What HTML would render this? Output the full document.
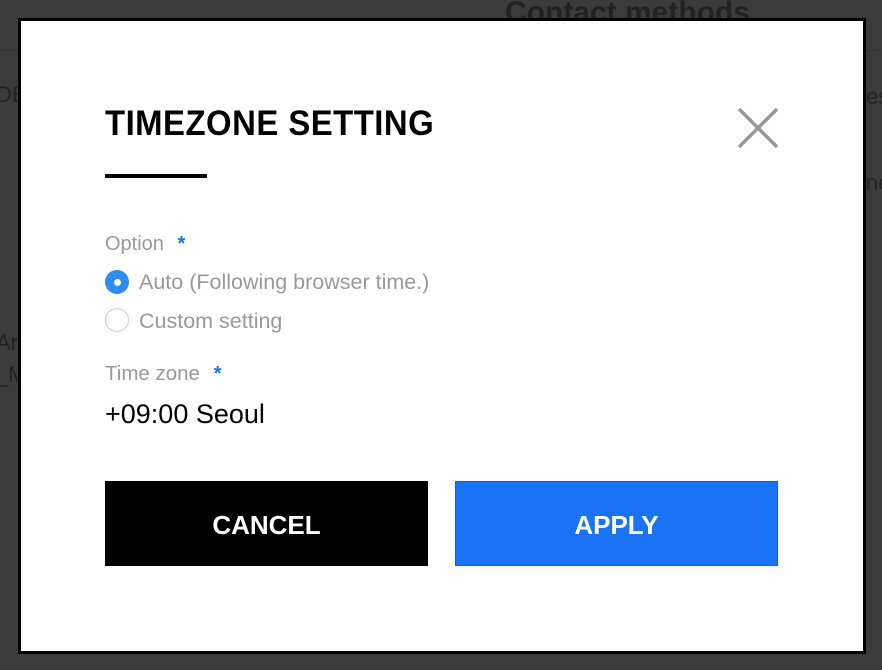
<!DOCTYPE html>
<html><head><meta charset="utf-8"><style>
body{margin:0;width:882px;height:670px;background:#3b3b3b;position:relative;overflow:hidden;font-family:"Liberation Sans","Noto Sans CJK KR",sans-serif}
.bg{position:absolute;color:#222;font-size:22px}
.m{position:absolute;left:18px;top:18px;width:842px;height:630px;background:#fff;border:3px solid #000}
.a{position:absolute}
</style></head><body>
<div class="bg" style="left:505px;top:-4px;font-size:30px;font-weight:bold">Contact methods</div>
<div class="bg" style="left:-4px;top:82px">DB</div>
<div class="bg" style="left:866px;top:84px">es</div>
<div class="bg" style="left:866px;top:170px">nc</div>
<div class="bg" style="left:-4px;top:330px">Am</div>
<div class="bg" style="left:-4px;top:362px">_M</div>
<div class="a" style="left:0;top:50px;width:882px;height:1px;background:#333"></div>
<div class="m"></div>
<div class="a" style="left:105px;top:104px;font-size:35px;font-weight:bold;color:#000;letter-spacing:0.5px;transform:scaleX(0.94);transform-origin:left">TIMEZONE SETTING</div>
<div class="a" style="left:105px;top:174px;width:102px;height:4px;background:#000"></div>
<svg class="a" style="left:736px;top:106px" width="44" height="44"><path d="M3 3L41 41M41 3L3 41" stroke="#999" stroke-width="3.5"/></svg>
<div class="a" style="left:105px;top:233px;font-size:20px;color:#999">Option <span style="color:#1a73f5;margin-left:8px;font-weight:bold">*</span></div>
<div class="a" style="left:105px;top:270px;width:24px;height:24px;border-radius:50%;background:#2e8bf0"></div>
<div class="a" style="left:114px;top:279px;width:7px;height:7px;border-radius:50%;background:#fff"></div>
<div class="a" style="left:139px;top:270px;font-size:21.5px;color:#999">Auto (Following browser time.)</div>
<div class="a" style="left:105px;top:308px;width:22px;height:22px;border-radius:50%;border:1.5px solid #ccc"></div>
<div class="a" style="left:139px;top:309px;font-size:21.5px;color:#999">Custom setting</div>
<div class="a" style="left:105px;top:362px;font-size:20.5px;color:#999">Time zone <span style="color:#1a73f5;margin-left:8px;font-weight:bold">*</span></div>
<div class="a" style="left:105px;top:399px;font-size:27px;color:#000">+09:00 Seoul</div>
<div class="a" style="left:105px;top:481px;width:323px;height:81px;padding-top:4px;background:#000;color:#fff;font-size:26px;font-weight:bold;display:flex;align-items:center;justify-content:center">CANCEL</div>
<div class="a" style="left:455px;top:481px;width:321px;background:#1a73f5;border:1px solid #1460d0;color:#fff;font-size:26px;font-weight:bold;display:flex;align-items:center;justify-content:center;padding-top:4px;height:79px">APPLY</div>
</body></html>
